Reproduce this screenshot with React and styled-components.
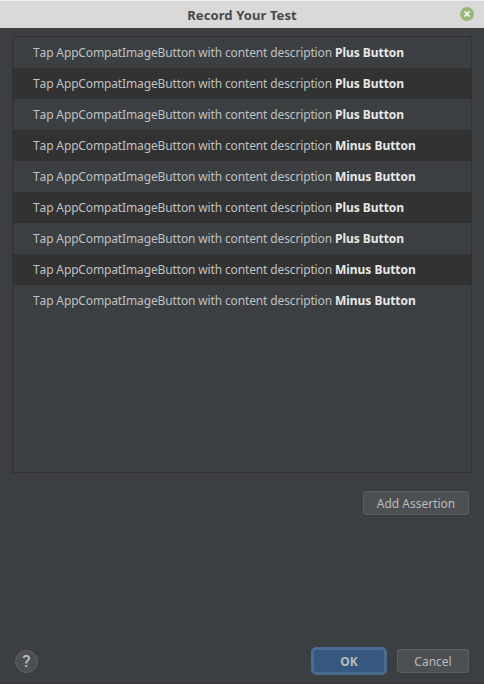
import React from "react";
import styled, { createGlobalStyle } from "styled-components";

const GlobalStyle = createGlobalStyle`
  *{box-sizing:border-box}
  body{margin:0;background:#3c3f41;font-family:"Noto Sans",sans-serif;}
`;
const Dialog = styled.main`
  width:484px;height:684px;background:#3c3f41;display:flex;flex-direction:column;overflow:hidden;
  box-shadow:inset 0 -1px #383639;
`;
const TitleBar = styled.header`
  height:28px;flex:none;background:#d9d9d9;display:grid;grid-template-columns:34px 1fr 34px;align-items:center;
  box-shadow:inset 0 1px #efefef;
`;
const Title = styled.h1`
  grid-column:2;margin:0;padding-top:1px;text-align:center;font-size:13px;line-height:18px;font-weight:700;color:#484848;
  letter-spacing:.1px;
`;
const Close = styled.button`
  border:0;padding:0;background:none;width:14px;height:14px;justify-self:center;display:flex;
`;
const Steps = styled.ul`
  list-style:none;margin:8px 12px 0;padding:0;height:437px;flex:none;border:1px solid #323232;
`;
const Step = styled.li`
  height:31px;padding-left:20px;line-height:31px;font-size:12px;color:#bfc1c2;white-space:pre;
  font-kerning:none;letter-spacing:-.137px;
  background:${p => (p.$dark ? "#323232" : "transparent")};
`;
const Target = styled.b`color:#e8e8e8;font-weight:700;letter-spacing:-.03px;`;
const AssertionRow = styled.div`
  display:flex;justify-content:flex-end;padding:18px 15px 0 0;
`;
const Button = styled.button`
  font:12px "Noto Sans",sans-serif;color:#bbbbbb;width:${p => p.$width}px;height:24px;padding:0;
  border:1px solid #5e6060;border-radius:3px;background:#4c5052;box-shadow:0 1px #36393a;
`;
const Primary = styled(Button)`
  height:28px;font-weight:700;border:2px solid #466d94;border-radius:5px;background:#365880;
  box-shadow:inset 0 0 0 1px #4c708c;
`;
const Footer = styled.footer`
  margin-top:auto;height:46px;display:flex;align-items:center;padding:0 15px;gap:10px;
`;
const Help = styled.button`
  width:23px;height:23px;border-radius:50%;border:1px solid #5e6060;background:#4c5052;
  padding:0;margin-right:auto;display:grid;place-items:center;
  color:#bbb;font:500 17px/21px Roboto,sans-serif;
`;
const targets = ["Plus", "Plus", "Plus", "Minus", "Minus", "Plus", "Plus", "Minus", "Minus"];

export default function App() {
  return <><GlobalStyle /><Dialog>
    <TitleBar><Title>Record Your Test</Title><Close aria-label="Close">
      <svg width="14" height="14" viewBox="0 0 14 14"><circle cx="7" cy="7" r="7" fill="#98b976" /><path d="M4.5 4.5l5 5M9.5 4.5l-5 5" stroke="#fff" strokeWidth="1.7" /></svg>
    </Close></TitleBar>
    <Steps>{targets.map((t, i) => <Step key={i} $dark={i % 2 === 1}>Tap AppCompatImageButton with content description <Target>{t} Button</Target></Step>)}</Steps>
    <AssertionRow><Button $width={106}>Add Assertion</Button></AssertionRow>
    <Footer><Help>?</Help><Primary $width={76}>OK</Primary><Button $width={72}>Cancel</Button></Footer>
  </Dialog></>;
}
